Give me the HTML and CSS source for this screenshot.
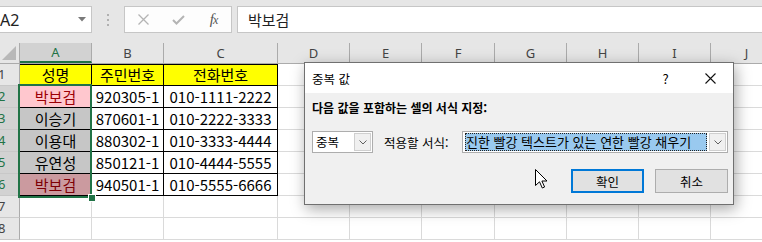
FILE: index.html
```html
<!DOCTYPE html>
<html lang="ko">
<head>
    <meta charset="UTF-8">
    <title>중복 값</title>
    <link rel="stylesheet" href="styles.css">
</head>
<body>
<div class="app">
    <div class="formula-bar">
        <div class="namebox">
            <span>A2</span>
            <svg class="nb-arrow" width="8" height="5" viewBox="0 0 8 5"><path d="M0 0 H8 L4 4.5 Z" fill="#7a7a7a"/></svg>
        </div>
        <div class="grip">
            <svg width="3" height="12" viewBox="0 0 3 12"><rect x="0" y="0" width="2" height="2" fill="#b0b0b0"/><rect x="0" y="5" width="2" height="2" fill="#b0b0b0"/><rect x="0" y="10" width="2" height="2" fill="#b0b0b0"/></svg>
        </div>
        <div class="fx-box">
            <span class="fx-slot">
                <svg width="11" height="11" viewBox="0 0 11 11"><path d="M0.5 0.5 L10.5 10.5 M10.5 0.5 L0.5 10.5" stroke="#b4b4b4" stroke-width="1.3"/></svg>
            </span>
            <span class="fx-slot">
                <svg width="13" height="10" viewBox="0 0 13 10"><path d="M1 5 L4.5 8.5 L12 1" stroke="#b4b4b4" stroke-width="2" fill="none"/></svg>
            </span>
            <span class="fx-slot"><span class="fx">f<small>x</small></span></span>
        </div>
        <div class="formula-input">박보검</div>
    </div>

    <div class="sheet">
        <div class="row head-row">
            <div class="corner"><svg width="14" height="14" viewBox="0 0 14 14"><path d="M14 0 V14 H0 Z" fill="#b8b8b8"/></svg></div>
            <div class="colhead sel">A</div>
            <div class="colhead">B</div>
            <div class="colhead">C</div>
            <div class="colhead">D</div>
            <div class="colhead">E</div>
            <div class="colhead">F</div>
            <div class="colhead">G</div>
            <div class="colhead">H</div>
            <div class="colhead">I</div>
            <div class="colhead">J</div>
        </div>
        <div class="row">
            <div class="rowhead"><span>1</span></div>
            <div class="cell tb yellow top">성명</div>
            <div class="cell tb yellow top">주민번호</div>
            <div class="cell tb yellow top">전화번호</div>
            <div class="cell"></div><div class="cell"></div><div class="cell"></div><div class="cell"></div><div class="cell"></div><div class="cell"></div><div class="cell"></div>
        </div>
        <div class="row">
            <div class="rowhead sel"><span>2</span></div>
            <div class="cell tb dup">박보검</div>
            <div class="cell tb">920305-1</div>
            <div class="cell tb">010-1111-2222</div>
            <div class="cell"></div><div class="cell"></div><div class="cell"></div><div class="cell"></div><div class="cell"></div><div class="cell"></div><div class="cell"></div>
        </div>
        <div class="row">
            <div class="rowhead sel"><span>3</span></div>
            <div class="cell tb shade">이승기</div>
            <div class="cell tb">870601-1</div>
            <div class="cell tb">010-2222-3333</div>
            <div class="cell"></div><div class="cell"></div><div class="cell"></div><div class="cell"></div><div class="cell"></div><div class="cell"></div><div class="cell"></div>
        </div>
        <div class="row">
            <div class="rowhead sel"><span>4</span></div>
            <div class="cell tb shade">이용대</div>
            <div class="cell tb">880302-1</div>
            <div class="cell tb">010-3333-4444</div>
            <div class="cell"></div><div class="cell"></div><div class="cell"></div><div class="cell"></div><div class="cell"></div><div class="cell"></div><div class="cell"></div>
        </div>
        <div class="row">
            <div class="rowhead sel"><span>5</span></div>
            <div class="cell tb shade">유연성</div>
            <div class="cell tb">850121-1</div>
            <div class="cell tb">010-4444-5555</div>
            <div class="cell"></div><div class="cell"></div><div class="cell"></div><div class="cell"></div><div class="cell"></div><div class="cell"></div><div class="cell"></div>
        </div>
        <div class="row">
            <div class="rowhead sel"><span>6</span></div>
            <div class="cell tb dup-shade">박보검</div>
            <div class="cell tb">940501-1</div>
            <div class="cell tb">010-5555-6666</div>
            <div class="cell"></div><div class="cell"></div><div class="cell"></div><div class="cell"></div><div class="cell"></div><div class="cell"></div><div class="cell"></div>
        </div>
        <div class="row">
            <div class="rowhead"><span>7</span></div>
            <div class="cell"></div><div class="cell"></div><div class="cell"></div><div class="cell"></div><div class="cell"></div><div class="cell"></div><div class="cell"></div><div class="cell"></div><div class="cell"></div><div class="cell"></div>
        </div>
        <div class="row">
            <div class="rowhead"><span>8</span></div>
            <div class="cell"></div><div class="cell"></div><div class="cell"></div><div class="cell"></div><div class="cell"></div><div class="cell"></div><div class="cell"></div><div class="cell"></div><div class="cell"></div><div class="cell"></div>
        </div>

        <!-- selected range A2:A6 -->
        <div class="selection"></div>
        <div class="fill-handle"></div>
    </div>

    <div class="dialog">
        <div class="dlg-title">
            <span class="dlg-caption">중복 값</span>
            <span class="dlg-btn">?</span>
            <span class="dlg-btn">
                <svg width="11" height="11" viewBox="0 0 11 11"><path d="M0.5 0.5 L10.5 10.5 M10.5 0.5 L0.5 10.5" stroke="#111" stroke-width="1.1"/></svg>
            </span>
        </div>
        <div class="dlg-body">
            <div class="dlg-heading">다음 값을 포함하는 셀의 서식 지정:</div>
            <div class="dlg-controls">
                <div class="combo small">
                    <span class="combo-text">중복</span>
                    <span class="combo-drop"><svg width="8" height="5" viewBox="0 0 8 5"><path d="M0.5 0.5 L4 4 L7.5 0.5" stroke="#606060" fill="none"/></svg></span>
                </div>
                <span class="dlg-label">적용할 서식:</span>
                <div class="combo wide">
                    <span class="combo-text picked">진한 빨강 텍스트가 있는 연한 빨강 채우기</span>
                    <span class="combo-drop"><svg width="8" height="5" viewBox="0 0 8 5"><path d="M0.5 0.5 L4 4 L7.5 0.5" stroke="#606060" fill="none"/></svg></span>
                </div>
            </div>
            <div class="dlg-buttons">
                <button class="btn default">확인</button>
                <button class="btn">취소</button>
            </div>
        </div>
        <svg class="cursor" width="13" height="20" viewBox="0 0 13 20"><path d="M0.5 0.5 V16.5 L4.5 12.8 L7.3 19 L9.6 18 L6.9 12 H12 Z" fill="#fff" stroke="#000" stroke-width="1" stroke-linejoin="miter"/></svg>
    </div>
</div>
</body>
</html>
```

FILE: styles.css
```css
body {
    margin: 0;
    background: #fff;
    font-family: "Noto Sans", "Noto Sans CJK KR", sans-serif;
    overflow: hidden;
}
.app {
    position: relative;
    width: 762px;
    height: 242px;
    overflow: hidden;
}

/* formula bar */
.formula-bar {
    height: 43px;
    box-sizing: border-box;
    padding-top: 6px;
    background: #e6e6e6;
    display: flex;
    align-items: flex-start;
}
.namebox {
    width: 92px;
    height: 27px;
    box-sizing: border-box;
    background: #fff;
    border: 1px solid #c6c6c6;
    border-left: none;
    display: flex;
    align-items: center;
    justify-content: space-between;
    padding-right: 5px;
    font-size: 16px;
    color: #222;
}
.grip {
    width: 32px;
    height: 27px;
    display: flex;
    align-items: center;
    justify-content: center;
}
.fx-box {
    width: 108px;
    height: 27px;
    box-sizing: border-box;
    background: #fdfdfd;
    border: 1px solid #c6c6c6;
    margin-right: 5px;
    display: flex;
}
.fx-slot {
    width: 35px;
    display: flex;
    align-items: center;
    justify-content: center;
}
.fx-slot:first-child {
    width: 36px;
}
.fx {
    font-family: "Liberation Serif", serif;
    font-style: italic;
    font-size: 15px;
    color: #555;
    letter-spacing: -1px;
}
.fx small {
    font-size: 12px;
}
.formula-input {
    flex: 1;
    height: 27px;
    box-sizing: border-box;
    background: #fff;
    border: 1px solid #c6c6c6;
    border-right: none;
    padding-left: 10px;
    font-family: "Noto Sans CJK KR", sans-serif;
    font-size: 15px;
    line-height: 25px;
    color: #222;
}

/* sheet grid */
.sheet {
    position: relative;
}
.row {
    display: grid;
    grid-template-columns: 20px 72px 72px 114px 72px 72px 73px 72px 72px 72px 72px;
    height: 22px;
}
.head-row {
    height: 21px;
    background: #e6e6e6;
    border-bottom: 1px solid #ababab;
    box-sizing: border-box;
}
.corner {
    display: flex;
    align-items: flex-end;
    justify-content: flex-end;
    padding: 0 3px 3px 0;
    border-right: 1px solid #ababab;
}
.colhead {
    border-right: 1px solid #ababab;
    text-align: center;
    font-size: 13px;
    line-height: 20px;
    color: #444;
}
.colhead.sel {
    background: #d2d2d2;
    color: #217346;
    border-bottom: 2px solid #217346;
    line-height: 18px;
}
.rowhead {
    box-sizing: border-box;
    background: #e6e6e6;
    border-right: 1px solid #ababab;
    border-bottom: 1px solid #c8c8c8;
    font-size: 13px;
    line-height: 21px;
    color: #444;
    overflow: hidden;
}
.rowhead span {
    margin-left: -2px;
}
.rowhead.sel {
    background: #d2d2d2;
    color: #217346;
}
.cell {
    box-sizing: border-box;
    border-right: 1px solid #dadada;
    border-bottom: 1px solid #dadada;
    font-family: "Noto Sans CJK KR", sans-serif;
    font-size: 15px;
    line-height: 21px;
    text-align: center;
    color: #000;
    white-space: nowrap;
    overflow: hidden;
}
.cell.tb {
    border-color: #000;
}
.cell.top {
    box-shadow: inset 0 1px 0 #000;
}
.yellow {
    background: #ffff00;
}
.dup {
    background: #ffc7ce;
    color: #9c0006;
}
.shade {
    background: #c6c6c6;
}
.dup-shade {
    background: #cb9a9f;
    color: #7d0005;
}
.selection {
    position: absolute;
    left: 18px;
    top: 41px;
    width: 74px;
    height: 114px;
    box-sizing: border-box;
    border: 2px solid #217346;
}
.fill-handle {
    position: absolute;
    left: 89px;
    top: 152px;
    width: 6px;
    height: 6px;
    background: #217346;
    box-shadow: 0 0 0 1px #fff;
}

/* dialog */
.dialog {
    position: absolute;
    left: 304px;
    top: 62px;
    width: 430px;
    height: 143px;
    box-sizing: border-box;
    background: #f0f0f0;
    border: 1px solid #707070;
    box-shadow: 2px 4px 14px rgba(0, 0, 0, 0.35);
    font-family: "Noto Sans CJK KR", sans-serif;
    font-size: 12.5px;
    color: #000;
}
.dlg-title {
    height: 30px;
    background: #fff;
    display: flex;
    align-items: center;
}
.dlg-caption {
    flex: 1;
    padding-left: 7px;
}
.dlg-btn {
    width: 45px;
    height: 30px;
    display: flex;
    align-items: center;
    justify-content: center;
    font-size: 13px;
}
.dlg-body {
    padding: 0 5px 0 7px;
}
.dlg-heading {
    margin-top: 6px;
    line-height: 17px;
    font-size: 12px;
    font-weight: bold;
}
.dlg-controls {
    margin-top: 15px;
    height: 22px;
    display: flex;
    align-items: center;
}
.combo {
    height: 22px;
    box-sizing: border-box;
    border: 1px solid #adadad;
    background: #fff;
    display: flex;
    align-items: center;
    padding: 1px;
}
.combo.small {
    width: 61px;
}
.combo.wide {
    width: 266px;
    margin-left: auto;
}
.combo-text {
    flex: 1;
    padding-left: 2px;
    line-height: 18px;
    white-space: nowrap;
    overflow: hidden;
}
.combo-text.picked {
    margin-left: 1px;
    margin-right: 2px;
    background: #99c9ef;
    outline: 1px dotted #222;
    outline-offset: -1px;
    padding-left: 1px;
    font-size: 13px;
}
.combo-drop {
    width: 17px;
    height: 18px;
    box-sizing: border-box;
    border: 1px solid #cfcfcf;
    background: #f0f0f0;
    display: flex;
    align-items: center;
    justify-content: center;
}
.dlg-label {
    margin-left: 11px;
}
.dlg-buttons {
    margin-top: 16px;
    display: flex;
    justify-content: flex-end;
    gap: 11px;
}
.btn {
    width: 73px;
    height: 24px;
    box-sizing: border-box;
    background: #e1e1e1;
    border: 1px solid #adadad;
    font-family: "Noto Sans CJK KR", sans-serif;
    font-size: 12.5px;
    color: #000;
    padding: 0;
}
.btn.default {
    border: 2px solid #0078d7;
}
.cursor {
    position: absolute;
    left: 230px;
    top: 106px;
}
```
